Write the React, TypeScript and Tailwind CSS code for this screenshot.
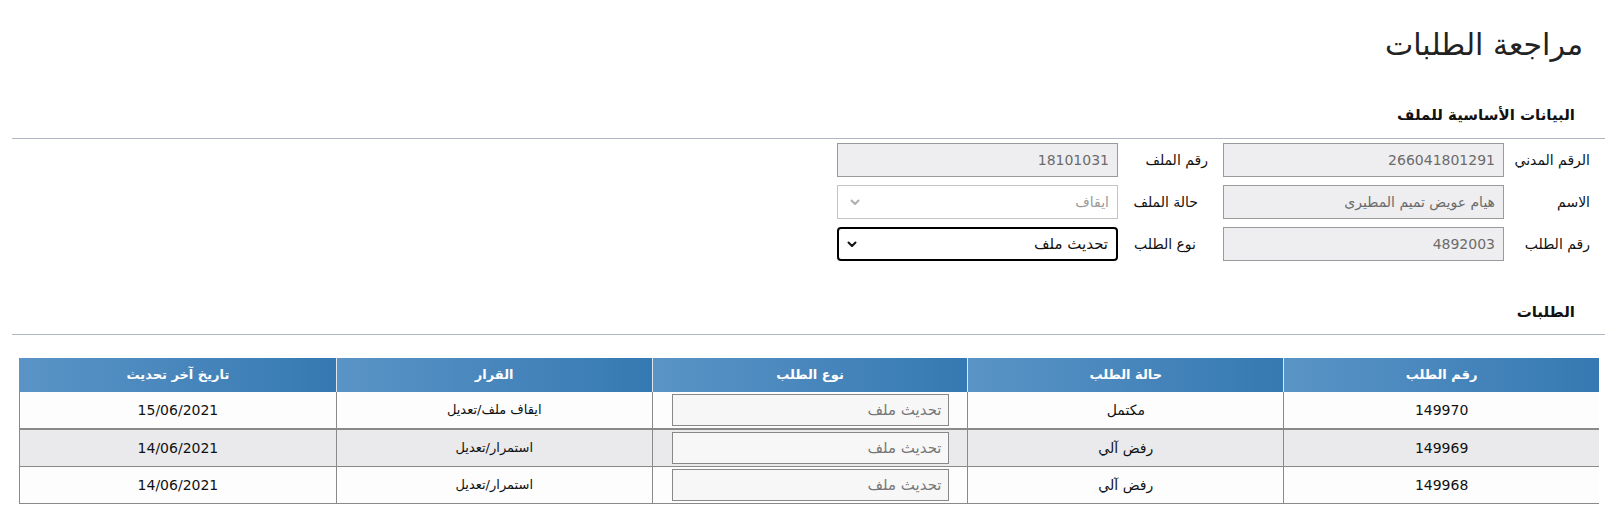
import React from "react";

const font = { fontFamily: '"DejaVu Sans", sans-serif' };

function Chevron({ color }: { color: string }) {
  return (
    <svg width="10" height="7" viewBox="0 0 10 7" fill="none">
      <path d="M1.5 1.5 L5 5 L8.5 1.5" stroke={color} strokeWidth="2" strokeLinecap="round" strokeLinejoin="round" />
    </svg>
  );
}

function ReadOnly({ value }: { value: string }) {
  return (
    <div className="w-[281px] h-[34px] border border-[#9a9a9a] bg-[#eeeef0] flex items-center pr-[8px] text-[14px] text-[#6b6b6b]">
      {value}
    </div>
  );
}

function Label({ text, w, pr = 0 }: { text: string; w: string; pr?: number }) {
  return (
    <div className={`${w} flex items-center text-[14px] text-[#111]`} style={{ paddingRight: pr }}>
      {text}
    </div>
  );
}

export default function App() {
  const rows = [
    { id: "149970", status: "مكتمل", type: "تحديث ملف", decision: "ايقاف ملف/تعديل", date: "15/06/2021" },
    { id: "149969", status: "رفض آلي", type: "تحديث ملف", decision: "استمرار/تعديل", date: "14/06/2021" },
    { id: "149968", status: "رفض آلي", type: "تحديث ملف", decision: "استمرار/تعديل", date: "14/06/2021" },
  ];
  const headers = ["رقم الطلب", "حالة الطلب", "نوع الطلب", "القرار", "تاريخ آخر تحديث"];

  return (
    <div dir="rtl" style={font} className="w-[1620px] h-[531px] bg-white text-[#111] overflow-hidden">
      {/* Title */}
      <div className="h-[100px] pr-[37px] pt-[25px]">
        <h1 className="text-[30px] leading-[40px] text-[#222]">مراجعة الطلبات</h1>
      </div>

      {/* Section 1 */}
      <div className="pr-[45px] h-[38px] flex items-start">
        <h2 className="text-[15px] font-bold leading-[30px]">البيانات الأساسية للملف</h2>
      </div>
      <div className="ml-[12px] mr-[15px] border-t border-[#b0b6c4]"></div>

      <div className="pr-[30px] pt-[4px] flex flex-col gap-[8px]">
        <div className="flex items-center h-[34px]">
          <Label text="الرقم المدني" w="w-[86px]" />
          <ReadOnly value="266041801291" />
          <Label text="رقم الملف" w="w-[105px]" pr={15} />
          <ReadOnly value="18101031" />
        </div>
        <div className="flex items-center h-[34px]">
          <Label text="الاسم" w="w-[86px]" />
          <ReadOnly value="هيام عويض تميم المطيرى" />
          <Label text="حالة الملف" w="w-[105px]" pr={25} />
          <div className="w-[281px] h-[34px] border border-[#c4c4c4] bg-white flex items-center justify-between pr-[8px] pl-[12px] text-[14px] text-[#9a9a9a]">
            <span>ايقاف</span>
            <Chevron color="#b0b0b0" />
          </div>
        </div>
        <div className="flex items-center h-[34px]">
          <Label text="رقم الطلب" w="w-[86px]" />
          <ReadOnly value="4892003" />
          <Label text="نوع الطلب" w="w-[105px]" pr={27} />
          <div className="w-[281px] h-[34px] border-2 border-black rounded-[4px] bg-white flex items-center justify-between pr-[8px] pl-[8px] text-[15px] text-[#111]">
            <span>تحديث ملف</span>
            <Chevron color="#111" />
          </div>
        </div>
      </div>

      {/* Section 2 */}
      <div className="pr-[45px] h-[37px] mt-[36px] flex items-start">
        <h2 className="text-[15px] font-bold leading-[30px]">الطلبات</h2>
      </div>
      <div className="ml-[12px] mr-[15px] border-t border-[#b0b6c4]"></div>

      <div className="mt-[23px] mr-[21px] ml-[19px] border-l border-[#8a8a8a]">
        <div className="grid grid-cols-5 h-[34px]">
          {headers.map((h, i) => (
            <div
              key={h}
              className={`flex items-center justify-center text-white font-bold text-[13px] bg-gradient-to-l from-[#3579b2] to-[#5a94c6] ${i < 4 ? "border-l border-[#dfe6ee]" : ""}`}
            >
              {h}
            </div>
          ))}
        </div>
        {rows.map((r, idx) => (
          <div
            key={r.id}
            className={`grid grid-cols-5 ${idx === 0 ? "h-[38px] border-b-2" : "h-[37px] border-b"} text-[14px] ${idx === 1 ? "bg-[#eaeaec]" : "bg-[#fdfdfd]"} border-[#8a8a8a]`}
          >
            <div className="flex items-center justify-center border-l border-[#8a8a8a]">{r.id}</div>
            <div className="flex items-center justify-center border-l border-[#8a8a8a]">{r.status}</div>
            <div className="flex items-center justify-center border-l border-[#8a8a8a]">
              <div className="w-[277px] h-[32px] border border-[#888] bg-[#f7f7f8] flex items-center pr-[6px] text-[15px] text-[#777]">
                {r.type}
              </div>
            </div>
            <div className="flex items-center justify-center border-l border-[#8a8a8a] text-[13px]">{r.decision}</div>
            <div className="flex items-center justify-center">{r.date}</div>
          </div>
        ))}
      </div>
    </div>
  );
}
